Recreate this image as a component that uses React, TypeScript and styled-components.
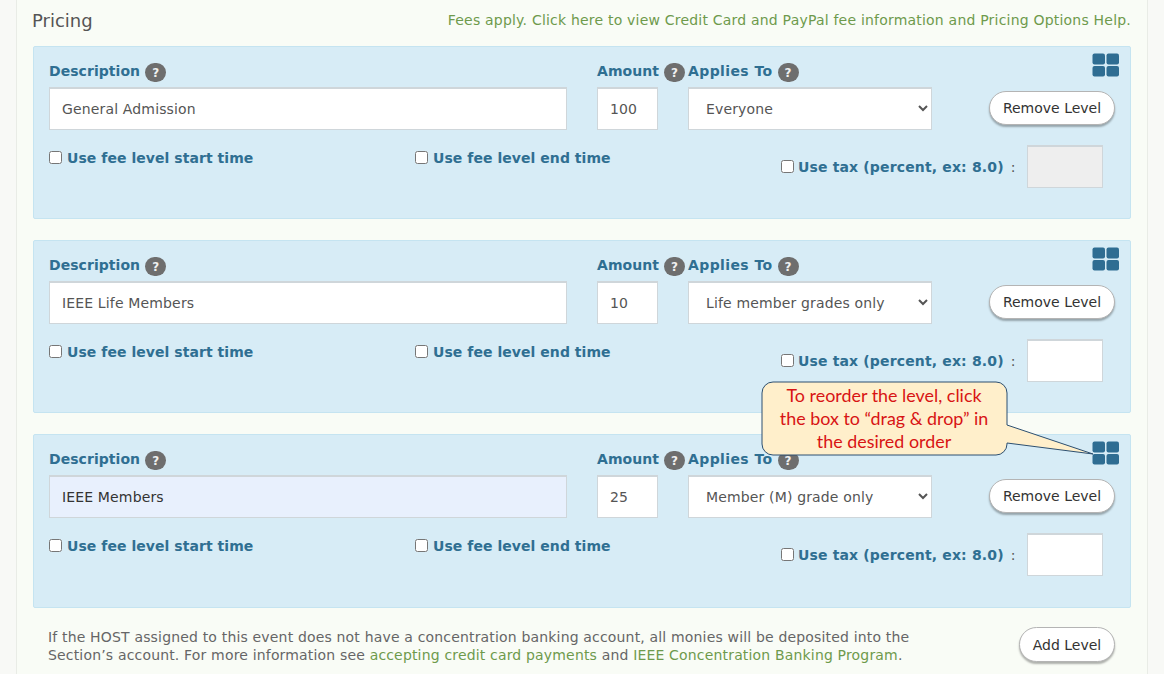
import React from "react";
import styled, { createGlobalStyle } from "styled-components";

const Global = createGlobalStyle`
  html, body { margin: 0; padding: 0; background: #fff; }
  body { font-family: "DejaVu Sans", Verdana, sans-serif; font-size: 14px; color: #555; }
`;
const Frame = styled.div`
  height: 674px; overflow: hidden; background: #f8f9f6; padding: 0 16px; box-sizing: content-box;
  width: 1132px; display: flex;
`;
const Panel = styled.main`
  width: 1132px; box-sizing: border-box; background: #f9fcf6;
  border-left: 1px solid #e9ece6; border-right: 1px solid #e9ece6;
  padding: 0 16px; position: relative;
`;
const Header = styled.header`
  height: 46px; display: flex; justify-content: space-between; align-items: flex-start;
`;
const Title = styled.h2`
  margin: 9px 0 0 -1px; font-size: 18px; line-height: 24px; font-weight: 400; color: #555;
`;
const FeeLink = styled.a`
  margin-top: 11px; font-size: 14px; line-height: 18px; color: #6e9a4c; letter-spacing: 0.205px; white-space: nowrap;
`;
const Level = styled.section<{ $tall?: boolean }>`
  position: relative; box-sizing: border-box; height: ${p => (p.$tall ? 174 : 173)}px;
  margin-bottom: 21px; padding: 16px 0 0 15px;
  background: #d7ecf6; border: 1px solid #c5e4f1; border-radius: 2px;
`;
const TopRow = styled.div`
  display: grid; grid-template-columns: 548px 91px 301px 126px;
`;
const Field = styled.div`
  display: flex; flex-direction: column;
`;
const LabelRow = styled.div`
  display: flex; align-items: flex-start; gap: 5px; height: 24px; white-space: nowrap;
`;
const Label = styled.label<{ $spacing?: number }>`
  font-size: 14px; line-height: 16px; font-weight: 700; color: #2f6f92; letter-spacing: ${p => p.$spacing ?? 0.05}px;
`;
const Help = styled.span`
  display: inline-flex; align-items: center; justify-content: center; flex: none;
  width: 21px; height: 19px; border-radius: 10px; margin-top: 0;
  background: #6e6e6e; color: #f0f0f0; font-size: 12px; font-weight: 700;
`;
const TextInput = styled.input<{ $w: number; $filled?: boolean }>`
  box-sizing: border-box; width: ${p => p.$w}px; height: 43px; padding: 0 0 0 12px;
  background: ${p => (p.$filled ? "#e8f0fd" : "#fff")}; color: ${p => (p.$filled ? "#333" : "#555")};
  border: 1px solid #cfd6da; border-top-width: 2px; border-radius: 0; outline: none;
  font-family: inherit; font-size: 14px; letter-spacing: 0.15px;
  &:disabled { background: #eee; }
`;
const Select = styled.select`
  box-sizing: border-box; width: 244px; height: 43px; padding: 0 0 0 13px;
  background: #fff; color: #555; border: 1px solid #cfd6da; border-top-width: 2px; border-radius: 0;
  font-family: inherit; font-size: 14px; letter-spacing: 0.15px; outline: none;
`;
const ButtonCell = styled.div`
  padding-top: 28px;
`;
const Pill = styled.button<{ $w: number; $h: number }>`
  box-sizing: border-box; width: ${p => p.$w}px; height: ${p => p.$h}px; padding: 0;
  background: #fff; color: #333; border: 1px solid #b4b4b4; border-radius: 18px;
  box-shadow: 0 2px 2px rgba(0,0,0,0.3); font-family: inherit; font-size: 14px; letter-spacing: 0;
`;
const Grip = styled.svg`
  position: absolute; top: 6px; right: 10px;
`;
const OptionRow = styled.div`
  display: flex; align-items: flex-start; margin-top: 15px;
`;
const CheckLabel = styled.label<{ $w?: number; $spacing?: number; $drop?: number }>`
  display: flex; align-items: center; ${p => (p.$w ? `width: ${p.$w}px;` : "")} height: 18px;
  margin-top: ${p => p.$drop ?? 0}px;
  font-size: 14px; font-weight: 700; color: #2f6f92; white-space: nowrap; letter-spacing: ${p => p.$spacing ?? 0.05}px;
`;
const Check = styled.input<{ $gap?: number }>`
  width: 13px; height: 13px; margin: -1px ${p => p.$gap ?? 5}px 0 0; flex: none;
`;
const TaxGroup = styled.div`
  display: flex; align-items: center;
`;
const Colon = styled.span`
  margin: 0 12px 0 7px; color: #555; font-size: 14px;
`;
const Footer = styled.footer`
  display: flex; justify-content: space-between; align-items: flex-start; padding: 0 0 0 15px; margin-top: -2px;
`;
const Note = styled.p`
  margin: 0; padding-top: 1px; width: 900px; font-size: 14px; line-height: 18px; color: #666; letter-spacing: 0.17px;
`;
const Green = styled.a`
  color: #6e9a4c;
`;
const AddCell = styled.div`
  padding: 0 16px 0 0;
`;
const Callout = styled.aside`
  position: absolute; left: 744px; top: 381px; width: 335px; height: 76px;
`;
const CalloutShape = styled.svg`
  position: absolute; inset: 0;
`;
const CalloutText = styled.p`
  position: relative; box-sizing: border-box; margin: 0; width: 246px; padding: 3px 15px 0;
  font-family: Lato, "Open Sans", sans-serif; font-size: 17.9px; line-height: 23px; text-align: center; color: #d81414;
`;

const GripIcon = () => (
  <Grip width="28" height="24" viewBox="0 0 28 24">
    <rect x="0.5" y="0.5" width="12.5" height="11" rx="2" fill="#2f6d92" />
    <rect x="14.5" y="0.5" width="12.5" height="11" rx="2" fill="#2f6d92" />
    <rect x="0.5" y="13" width="12.5" height="10.5" rx="2" fill="#2f6d92" />
    <rect x="14.5" y="13" width="12.5" height="10.5" rx="2" fill="#2f6d92" />
  </Grip>
);

type LevelData = {
  description: string; amount: string; applies: string; taxDisabled?: boolean; filled?: boolean; tall?: boolean;
};
const levels: LevelData[] = [
  { description: "General Admission", amount: "100", applies: "Everyone", taxDisabled: true },
  { description: "IEEE Life Members", amount: "10", applies: "Life member grades only" },
  { description: "IEEE Members", amount: "25", applies: "Member (M) grade only", filled: true, tall: true },
];

const LevelCard = ({ level }: { level: LevelData }) => (
  <Level $tall={level.tall}>
    <GripIcon />
    <TopRow>
      <Field>
        <LabelRow><Label>Description</Label><Help>?</Help></LabelRow>
        <TextInput $w={518} $filled={level.filled} defaultValue={level.description} />
      </Field>
      <Field>
        <LabelRow><Label>Amount</Label><Help>?</Help></LabelRow>
        <TextInput $w={61} defaultValue={level.amount} />
      </Field>
      <Field>
        <LabelRow><Label $spacing={0.4}>Applies To</Label><Help>?</Help></LabelRow>
        <Select defaultValue={level.applies}><option>{level.applies}</option></Select>
      </Field>
      <ButtonCell><Pill $w={126} $h={34}>Remove Level</Pill></ButtonCell>
    </TopRow>
    <OptionRow>
      <CheckLabel $w={366} $drop={4}><Check type="checkbox" />Use fee level start time</CheckLabel>
      <CheckLabel $w={366} $drop={4}><Check type="checkbox" />Use fee level end time</CheckLabel>
      <TaxGroup>
        <CheckLabel $spacing={0.15}><Check type="checkbox" $gap={4} />Use tax (percent, ex: 8.0)</CheckLabel>
        <Colon>:</Colon>
        <TextInput $w={76} disabled={level.taxDisabled} />
      </TaxGroup>
    </OptionRow>
  </Level>
);

export default function App() {
  return (
    <>
      <Global />
      <Frame>
        <Panel>
          <Header>
            <Title>Pricing</Title>
            <FeeLink>Fees apply. Click here to view Credit Card and PayPal fee information and Pricing Options Help.</FeeLink>
          </Header>
          {levels.map(l => <LevelCard key={l.description} level={l} />)}
          <Footer>
            <Note>
              If the HOST assigned to this event does not have a concentration banking account, all monies will be deposited into the Section’s account. For more information see <Green>accepting credit card payments</Green> and <Green>IEEE Concentration Banking Program</Green>.
            </Note>
            <AddCell><Pill $w={96} $h={35}>Add Level</Pill></AddCell>
          </Footer>
          <Callout>
            <CalloutShape width="335" height="76" viewBox="0 0 335 76">
              <path d="M12 1 H235 a11 11 0 0 1 11 11 V44 L332 73 L246 62 V63 a11 11 0 0 1 -11 11 H12 a11 11 0 0 1 -11 -11 V12 a11 11 0 0 1 11 -11 Z" fill="#ffefcb" stroke="#2c4f70" strokeWidth="1" />
            </CalloutShape>
            <CalloutText>To reorder the level, click the box to “drag &amp; drop” in the desired order</CalloutText>
          </Callout>
        </Panel>
      </Frame>
    </>
  );
}
